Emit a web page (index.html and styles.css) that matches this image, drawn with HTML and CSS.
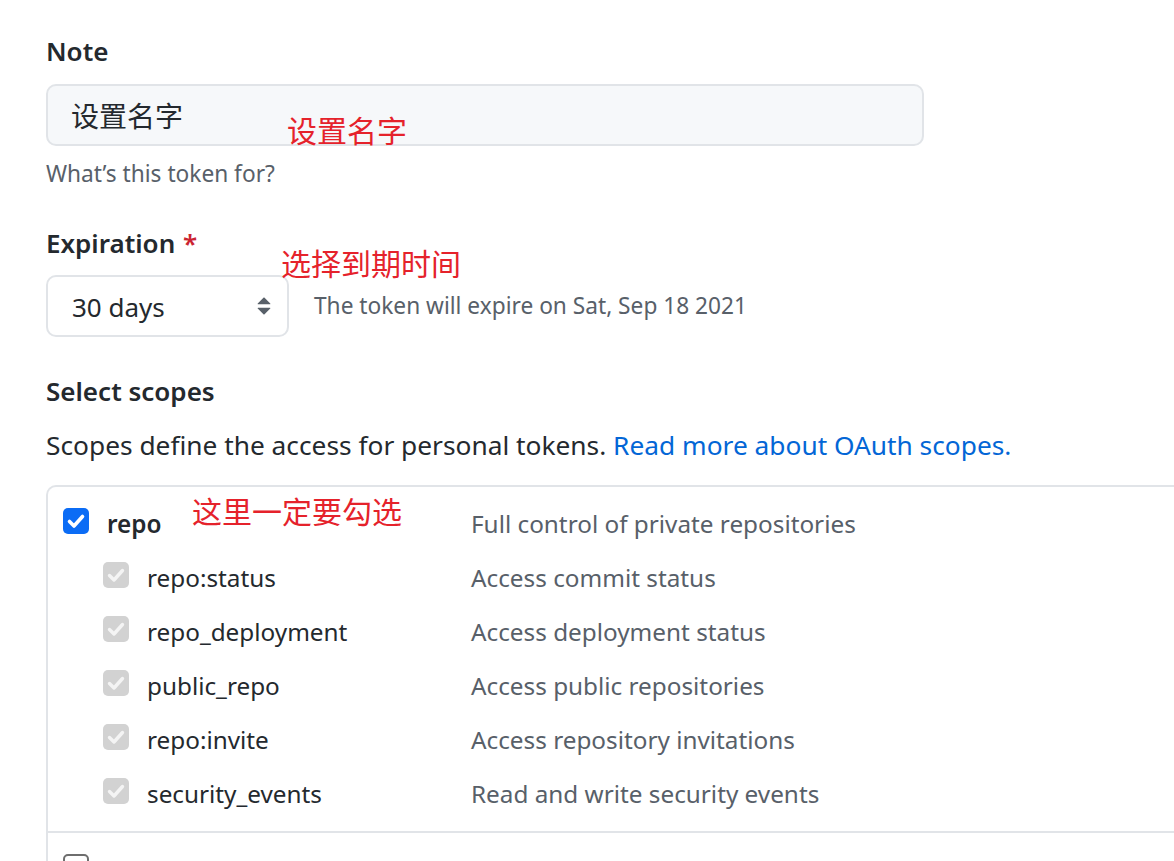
FILE: index.html
```html
<!DOCTYPE html>
<html lang="zh">
<head>
<meta charset="utf-8">
<title>New personal access token</title>
<link rel="stylesheet" href="styles.css">
</head>
<body>
<main class="page">
  <div class="form-group">
    <label class="label" for="note">Note</label>
    <div class="control-row">
      <input class="input" id="note" type="text" value="设置名字">
      <span class="annot annot-name">设置名字</span>
    </div>
    <p class="hint">What’s this token for?</p>
  </div>

  <div class="form-group">
    <label class="label">Expiration <span class="req">*</span></label>
    <div class="control-row">
      <div class="select">
        <span class="select-value">30 days</span>
        <svg class="select-arrows" viewBox="0 0 16 16" width="28" height="28" aria-hidden="true">
          <path fill="#586069" d="M4.427 9.427l3.396 3.396a.25.25 0 00.354 0l3.396-3.396A.25.25 0 0011.396 9H4.604a.25.25 0 00-.177.427zM4.427 6.573l3.396-3.396a.25.25 0 01.354 0l3.396 3.396A.25.25 0 0111.396 7H4.604a.25.25 0 01-.177-.427z"/>
        </svg>
      </div>
      <span class="expire-note">The token will expire on Sat, Sep 18 2021</span>
      <span class="annot annot-exp">选择到期时间</span>
    </div>
  </div>

  <div class="form-group scopes-group">
    <label class="label">Select scopes</label>
    <p class="desc">Scopes define the access for personal tokens. <a class="link" href="#">Read more about OAuth scopes.</a></p>
    <div class="scopes">
      <div class="scope-group">
        <div class="scope-row parent">
          <div class="scope-left">
            <span class="cb cb-on"><svg viewBox="0 0 26 26" width="26" height="26"><path d="M6.5 13.5l4.5 4.5 8.5-9.5" fill="none" stroke="#fff" stroke-width="3.6" stroke-linecap="round" stroke-linejoin="round"/></svg></span>
            <span class="scope-name strong">repo</span>
          </div>
          <span class="scope-desc">Full control of private repositories</span>
        </div>
        <div class="scope-row child">
          <div class="scope-left">
            <span class="cb cb-dis"><svg viewBox="0 0 26 26" width="26" height="26"><path d="M6.5 13.5l4.5 4.5 8.5-9.5" fill="none" stroke="#f4f4f4" stroke-width="3.4" stroke-linecap="round" stroke-linejoin="round"/></svg></span>
            <span class="scope-name">repo:status</span>
          </div>
          <span class="scope-desc">Access commit status</span>
        </div>
        <div class="scope-row child">
          <div class="scope-left">
            <span class="cb cb-dis"><svg viewBox="0 0 26 26" width="26" height="26"><path d="M6.5 13.5l4.5 4.5 8.5-9.5" fill="none" stroke="#f4f4f4" stroke-width="3.4" stroke-linecap="round" stroke-linejoin="round"/></svg></span>
            <span class="scope-name">repo_deployment</span>
          </div>
          <span class="scope-desc">Access deployment status</span>
        </div>
        <div class="scope-row child">
          <div class="scope-left">
            <span class="cb cb-dis"><svg viewBox="0 0 26 26" width="26" height="26"><path d="M6.5 13.5l4.5 4.5 8.5-9.5" fill="none" stroke="#f4f4f4" stroke-width="3.4" stroke-linecap="round" stroke-linejoin="round"/></svg></span>
            <span class="scope-name">public_repo</span>
          </div>
          <span class="scope-desc">Access public repositories</span>
        </div>
        <div class="scope-row child">
          <div class="scope-left">
            <span class="cb cb-dis"><svg viewBox="0 0 26 26" width="26" height="26"><path d="M6.5 13.5l4.5 4.5 8.5-9.5" fill="none" stroke="#f4f4f4" stroke-width="3.4" stroke-linecap="round" stroke-linejoin="round"/></svg></span>
            <span class="scope-name">repo:invite</span>
          </div>
          <span class="scope-desc">Access repository invitations</span>
        </div>
        <div class="scope-row child">
          <div class="scope-left">
            <span class="cb cb-dis"><svg viewBox="0 0 26 26" width="26" height="26"><path d="M6.5 13.5l4.5 4.5 8.5-9.5" fill="none" stroke="#f4f4f4" stroke-width="3.4" stroke-linecap="round" stroke-linejoin="round"/></svg></span>
            <span class="scope-name">security_events</span>
          </div>
          <span class="scope-desc">Read and write security events</span>
        </div>
        <span class="annot annot-repo">这里一定要勾选</span>
      </div>
      <div class="scope-group">
        <div class="scope-row parent">
          <div class="scope-left">
            <span class="cb cb-off"></span>
          </div>
        </div>
      </div>
    </div>
  </div>
</main>
</body>
</html>
```

FILE: styles.css
```css
html, body {
  margin: 0;
  padding: 0;
  background: #ffffff;
}

body {
  overflow: hidden;
  font-family: "Noto Sans", "Noto Sans CJK SC", sans-serif;
  color: #24292e;
  font-size: 24.5px;
}

.page {
  width: 1400px;
  padding: 33px 0 0 46px;
  box-sizing: border-box;
}

.form-group + .form-group {
  margin-top: 36px;
}

.scopes-group {
  margin-top: 35px;
}

.label {
  display: block;
  font-size: 26px;
  font-weight: 600;
  line-height: 36px;
  margin-bottom: 14.5px;
}

.req {
  color: #cb2431;
  margin-left: 1px;
}

.control-row {
  position: relative;
  display: flex;
  align-items: center;
}

.input {
  width: 878px;
  height: 62px;
  box-sizing: border-box;
  border: 2px solid #e1e4e8;
  border-radius: 10px;
  background: #f6f8fa;
  padding: 0 23px;
  font-family: "Noto Sans", "Noto Sans CJK SC", sans-serif;
  font-size: 28px;
  color: #24292e;
  outline: none;
  margin: 0;
}

.hint {
  margin: 13px 0 0;
  font-size: 22.7px;
  line-height: 30px;
  color: #586069;
}

.select {
  width: 243px;
  height: 62px;
  box-sizing: border-box;
  border: 2px solid #e1e4e8;
  border-radius: 10px;
  background: #ffffff;
  padding: 2px 9px 0 24px;
  display: flex;
  align-items: center;
  font-size: 26px;
  color: #24292e;
  flex: none;
}

.select-value {
  flex: 1;
  line-height: 36px;
}

.select-arrows {
  flex: none;
  display: block;
  margin-top: -2px;
}

.expire-note {
  margin-left: 25px;
  font-size: 22.7px;
  line-height: 36px;
  color: #586069;
}

.desc {
  margin: 17.5px 0 0;
  line-height: 36px;
  font-size: 26.3px;
  color: #24292e;
}

.link {
  color: #0366d6;
  text-decoration: none;
}

.scopes {
  margin-top: 22.5px;
  border-top: 2px solid #e1e4e8;
  border-left: 2px solid #e1e4e8;
  border-top-left-radius: 10px;
}

.scope-group {
  position: relative;
  padding: 7px 0 13px;
}

.scope-group + .scope-group {
  border-top: 2px solid #e1e4e8;
}

.scope-row {
  display: flex;
  align-items: center;
  height: 54px;
}

.scope-left {
  display: flex;
  align-items: center;
  width: 423px;
  box-sizing: border-box;
  flex: none;
}

.parent .scope-left {
  padding-left: 15px;
}

.child .scope-left {
  padding-left: 55px;
}

.cb {
  width: 26px;
  height: 26px;
  border-radius: 5px;
  box-sizing: border-box;
  flex: none;
  display: block;
  margin-right: 18px;
}

.cb svg {
  display: block;
}

.cb-on {
  background: #0b6cf5;
}

.cb-dis {
  background: #d2d2d2;
}

.cb-off {
  background: #ffffff;
  border: 2px solid #6e6e6e;
}

.scope-name,
.scope-desc {
  line-height: 36px;
  padding-top: 5px;
  font-size: 24.3px;
}

.scope-name {
  color: #24292e;
  white-space: nowrap;
}

.strong {
  font-weight: 600;
}

.scope-desc {
  color: #586069;
  white-space: nowrap;
}

.annot {
  position: absolute;
  font-family: "Noto Sans CJK SC", sans-serif;
  font-size: 30px;
  line-height: 30px;
  color: #e5222b;
  white-space: nowrap;
}

.annot-name {
  left: 241px;
  top: 30px;
}

.annot-exp {
  left: 235px;
  top: -28px;
}

.annot-repo {
  left: 144px;
  top: 8px;
}
```
